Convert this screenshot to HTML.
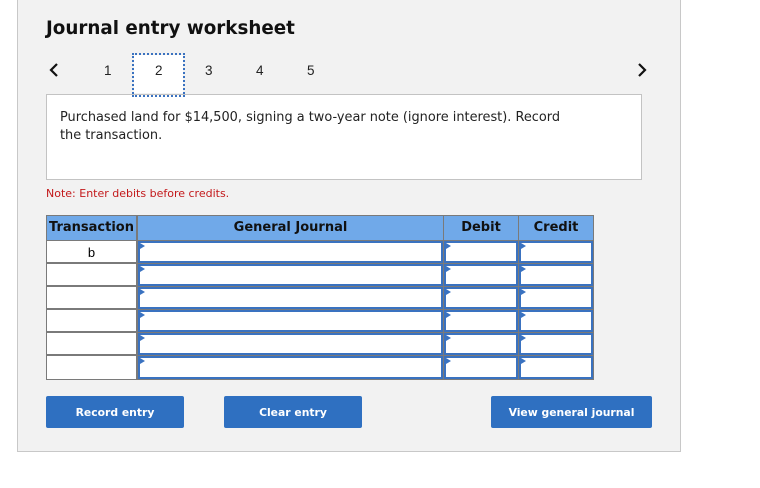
<!DOCTYPE html>
<html><head><meta charset="utf-8"><style>
*{margin:0;padding:0;box-sizing:border-box}
body{width:760px;height:488px;background:#fff;font-family:"DejaVu Sans","Liberation Sans",sans-serif;position:relative;overflow:hidden}
.a{position:absolute}
#panel{left:17px;top:-1px;width:664px;height:453px;background:#f2f2f2;border:1px solid #c8c8c8}
h1{position:absolute;left:46px;top:18px;font-size:18.3px;font-weight:bold;color:#111}
.n{position:absolute;top:63px;font-family:"Liberation Sans",sans-serif;font-size:13.5px;color:#222}
.box{left:46px;top:94px;width:596px;height:86px;background:#fff;border:1px solid #c3c3c3;font-size:12.9px;color:#222;padding:14px 0 0 13px;line-height:18px}
.note{left:46px;top:187px;font-size:11px;color:#c3191b}
.grid{left:46px;top:215px;width:548px;height:165px;background:#7a7a7a}
.h{position:absolute;top:1px;height:24px;background:#70a9e9;font-weight:bold;font-size:13px;color:#111;text-align:center;line-height:24px}
.c{position:absolute;background:#fff}
.i{position:absolute;background:#fff;border:2px solid #3a72c0}
.i:before{content:"";position:absolute;left:0;top:0;border-left:5px solid #3a72c0;border-top:3px solid transparent;border-bottom:3px solid transparent}
.btn{position:absolute;top:396px;height:32px;background:#2f70c1;border-radius:2px;color:#fff;font-weight:bold;font-size:10.8px;text-align:center;line-height:33px}
</style></head><body>
<div id="panel" class="a"></div>
<h1>Journal entry worksheet</h1>
<svg class="a" style="left:48px;top:62px" width="14" height="16"><path d="M9 2 L3 8 L9 14" stroke="#111" stroke-width="2.2" fill="none"/></svg>
<svg class="a" style="left:636px;top:62px" width="14" height="16"><path d="M3 2 L9 8 L3 14" stroke="#111" stroke-width="2.2" fill="none"/></svg>
<div class="a box">Purchased land for $14,500, signing a two-year note (ignore interest). Record<br>the transaction.</div>
<div class="a" style="left:132px;top:53px;width:53px;height:44px;border:2px dotted #3a72c0;z-index:2"></div>
<div class="a" style="left:134px;top:55px;width:49px;height:38px;background:#fff"></div>
<div class="n" style="left:104px">1</div>
<div class="n" style="left:155px">2</div>
<div class="n" style="left:205px">3</div>
<div class="n" style="left:256px">4</div>
<div class="n" style="left:307px">5</div>
<div class="a note">Note: Enter debits before credits.</div>
<div class="a grid">
<div class="h" style="left:1px;width:89px">Transaction</div>
<div class="h" style="left:92px;width:305px">General Journal</div>
<div class="h" style="left:398px;width:74px">Debit</div>
<div class="h" style="left:473px;width:74px">Credit</div>
<div class="c" style="left:1px;top:26px;width:89px;height:21px;text-align:center;font-family:'Liberation Sans',sans-serif;font-size:13px;line-height:24px">b</div>
<div class="c" style="left:1px;top:49px;width:89px;height:21px"></div>
<div class="c" style="left:1px;top:72px;width:89px;height:21px"></div>
<div class="c" style="left:1px;top:95px;width:89px;height:21px"></div>
<div class="c" style="left:1px;top:118px;width:89px;height:21px"></div>
<div class="c" style="left:1px;top:141px;width:89px;height:23px"></div>
<div class="i" style="left:92px;top:26px;width:305px;height:22px"></div>
<div class="i" style="left:92px;top:49px;width:305px;height:22px"></div>
<div class="i" style="left:92px;top:72px;width:305px;height:22px"></div>
<div class="i" style="left:92px;top:95px;width:305px;height:22px"></div>
<div class="i" style="left:92px;top:118px;width:305px;height:22px"></div>
<div class="i" style="left:92px;top:141px;width:305px;height:23px"></div>
<div class="i" style="left:398px;top:26px;width:74px;height:22px"></div>
<div class="i" style="left:398px;top:49px;width:74px;height:22px"></div>
<div class="i" style="left:398px;top:72px;width:74px;height:22px"></div>
<div class="i" style="left:398px;top:95px;width:74px;height:22px"></div>
<div class="i" style="left:398px;top:118px;width:74px;height:22px"></div>
<div class="i" style="left:398px;top:141px;width:74px;height:23px"></div>
<div class="i" style="left:473px;top:26px;width:74px;height:22px"></div>
<div class="i" style="left:473px;top:49px;width:74px;height:22px"></div>
<div class="i" style="left:473px;top:72px;width:74px;height:22px"></div>
<div class="i" style="left:473px;top:95px;width:74px;height:22px"></div>
<div class="i" style="left:473px;top:118px;width:74px;height:22px"></div>
<div class="i" style="left:473px;top:141px;width:74px;height:23px"></div>
</div>
<div class="btn" style="left:46px;width:138px">Record entry</div>
<div class="btn" style="left:224px;width:138px">Clear entry</div>
<div class="btn" style="left:491px;width:161px">View general journal</div>
</body></html>
